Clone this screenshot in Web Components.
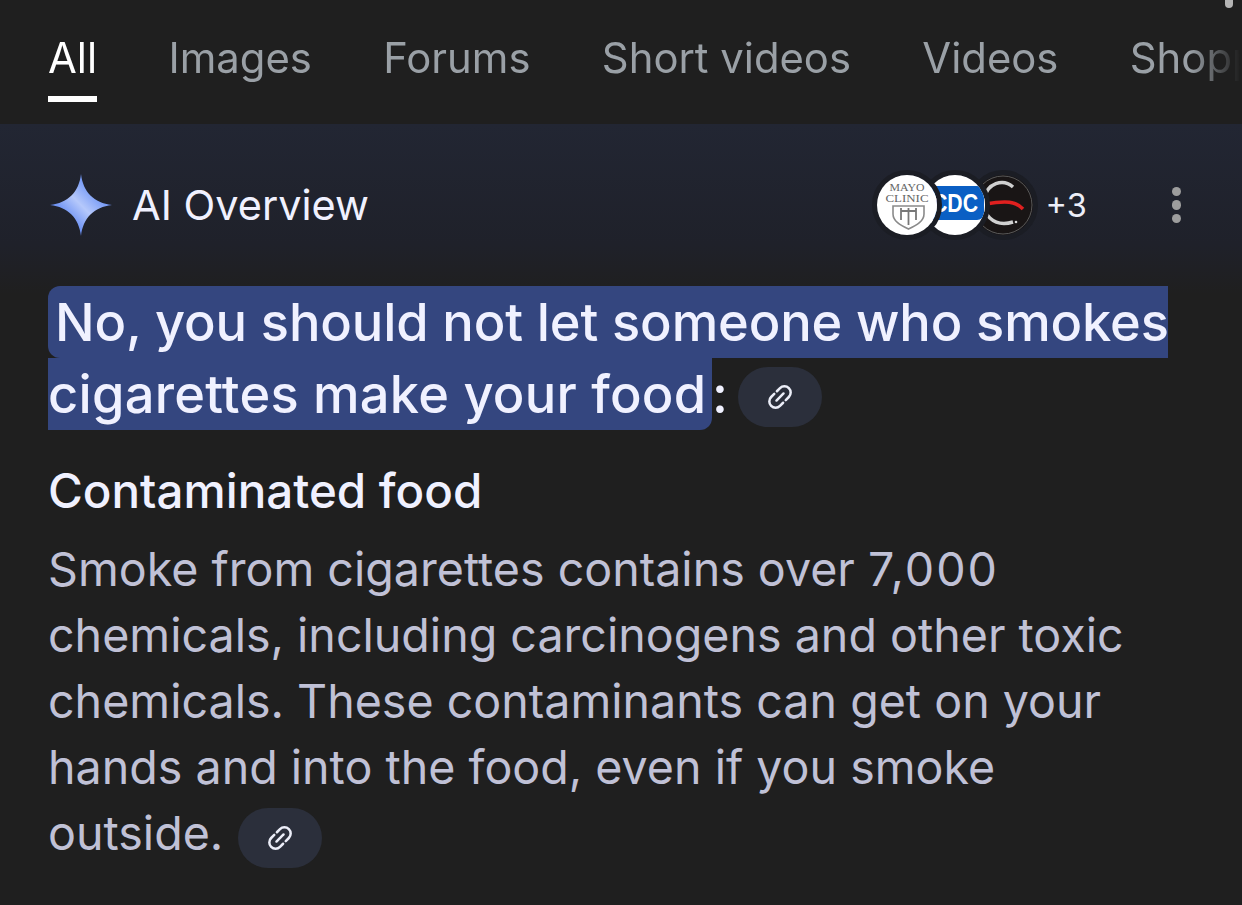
<!DOCTYPE html>
<html>
<head>
<meta charset="utf-8">
<title>AI Overview</title>
<style>
    html, body { margin: 0; height: 100%; background: #1f1f1f; overflow: hidden; }
    body { font-family: Inter, "Noto Sans", sans-serif; }
    .num { letter-spacing: 2px; }
</style>
</head>
<body>
<search-tabs>
    <tab-item active>All</tab-item>
    <tab-item>Images</tab-item>
    <tab-item>Forums</tab-item>
    <tab-item>Short videos</tab-item>
    <tab-item>Videos</tab-item>
    <tab-item>Shopping</tab-item>
</search-tabs>
<ai-overview>
    <overview-header></overview-header>
    <overview-title></overview-title>
    <overview-section heading="Contaminated food">
        Smoke from cigarettes contains over <span class="num">7,000</span> chemicals, including carcinogens and other toxic chemicals. These contaminants can get on your hands and into the food, even if you smoke outside.
    </overview-section>
</ai-overview>

<script>
const LINK_SVG = `<svg width="30" height="30" viewBox="0 0 24 24" fill="none" stroke="#eceef8" stroke-width="2" stroke-linecap="round" stroke-linejoin="round">
    <g transform="rotate(-45 12 12)">
        <path d="M10.500 7H7a5 5 0 0 0 0 10h3.500"/>
        <path d="M13.500 7H17a5 5 0 0 1 0 10h-3.500"/>
        <path d="M8 12h8"/>
    </g>
</svg>`;

class LinkChip extends HTMLElement {
    constructor() {
        super();
        this.attachShadow({ mode: "open" });
        this.shadowRoot.innerHTML = `
            <style>
                :host {
                    display: inline-flex;
                    align-items: center;
                    justify-content: center;
                    width: 84px;
                    height: 60px;
                    border-radius: 30px;
                    background: #2b2f3b;
                    vertical-align: middle;
                }
                svg { display: block; }
            </style>
            ${LINK_SVG}
        `;
    }
}
customElements.define("link-chip", LinkChip);

class TabItem extends HTMLElement {
    constructor() {
        super();
        this.attachShadow({ mode: "open" });
        this.shadowRoot.innerHTML = `
            <style>
                :host {
                    display: block;
                    flex: none;
                    height: 102px;
                    padding-top: 31px;
                    box-sizing: border-box;
                    font-size: 41.8px;
                    line-height: 54px;
                    color: #9aa0a6;
                }
                :host([active]) {
                    color: #fff;
                    border-bottom: 6px solid #fff;
                }
            </style>
            <slot></slot>
        `;
    }
}
customElements.define("tab-item", TabItem);

class SearchTabs extends HTMLElement {
    constructor() {
        super();
        this.attachShadow({ mode: "open" });
        this.shadowRoot.innerHTML = `
            <style>
                :host {
                    display: block;
                    position: relative;
                    height: 124px;
                    background: #1f1f1f;
                    overflow: hidden;
                }
                .row {
                    display: flex;
                    gap: 71.4px;
                    padding-left: 48px;
                    width: 1240px;
                    box-sizing: border-box;
                    overflow: hidden;
                    -webkit-mask-image: linear-gradient(90deg, #000 1190px, transparent 1240px);
                    mask-image: linear-gradient(90deg, #000 1190px, transparent 1240px);
                }
                .thumb {
                    position: absolute;
                    left: 1225px;
                    top: -4px;
                    width: 8px;
                    height: 12px;
                    border-radius: 4px;
                    background: #b4b4b4;
                }
            </style>
            <div class="row"><slot></slot></div>
            <div class="thumb"></div>
        `;
    }
}
customElements.define("search-tabs", SearchTabs);

class OverviewHeader extends HTMLElement {
    constructor() {
        super();
        this.attachShadow({ mode: "open" });
        this.shadowRoot.innerHTML = `
            <style>
                :host {
                    display: flex;
                    align-items: center;
                    height: 162px;
                    box-sizing: border-box;
                    padding: 0 0 0 50px;
                }
                .spark { flex: none; display: block; margin-right: 20px; }
                .label { font-size: 41.5px; font-weight: 400; color: #f0f1ff; flex: 1; }
                .stack { display: flex; align-items: center; margin-right: 8px; }
                .src {
                    flex: none;
                    width: 60px;
                    height: 60px;
                    border: 5px solid #1b1d24;
                    border-radius: 50%;
                    overflow: hidden;
                    margin-left: -22px;
                    box-sizing: content-box;
                }
                .src svg { display: block; }
                .src:nth-child(1) { z-index: 3; }
                .src:nth-child(2) { z-index: 2; }
                .src:nth-child(3) { z-index: 1; }
                .more { font-size: 32.5px; color: #eceef8; width: 41px; }
                .dots { display: flex; flex-direction: column; gap: 4px; margin: 0 61px 0 85px; }
                .dots i { display: block; width: 9.5px; height: 9.5px; border-radius: 50%; background: #9d9d9d; }
            </style>
            <svg class="spark" width="62" height="62" viewBox="0 0 62 62">
                <defs>
                    <linearGradient id="sg" x1="0.15" y1="0.85" x2="0.85" y2="0.15">
                        <stop offset="0" stop-color="#3f6ff0"/>
                        <stop offset="0.5" stop-color="#b5c8fb"/>
                        <stop offset="1" stop-color="#4f7df2"/>
                    </linearGradient>
                </defs>
                <path d="M31 0C33 18 44 29 62 31C44 33 33 44 31 62C29 44 18 33 0 31C18 29 29 18 31 0Z" fill="url(#sg)"/>
            </svg>
            <div class="label">AI Overview</div>
            <div class="stack">
                <div class="src">
                    <svg width="60" height="60" viewBox="0 0 60 60">
                        <rect width="60" height="60" fill="#fff"/>
                        <text x="30" y="16" text-anchor="middle" textLength="35" lengthAdjust="spacingAndGlyphs" font-family="'Liberation Serif', serif" font-size="9.500" fill="#666">MAYO</text>
                        <text x="30" y="27" text-anchor="middle" textLength="43" lengthAdjust="spacingAndGlyphs" font-family="'Liberation Serif', serif" font-size="9.500" fill="#666">CLINIC</text>
                        <path d="M16 31h31v8c0 7-7 11-15.500 15c-8.500-4-15.500-8-15.500-15z" fill="none" stroke="#8a8a8a" stroke-width="1.6"/>
                        <path d="M24 33v12M31.500 33v17M39 33v12M24 36h15" fill="none" stroke="#777" stroke-width="1.8"/>
                    </svg>
                </div>
                <div class="src">
                    <svg width="60" height="60" viewBox="0 0 60 60">
                        <rect width="60" height="60" fill="#fff"/>
                        <rect x="-10" y="11" width="69" height="34" rx="7" fill="#0a5fc4"/>
                        <text x="30" y="37" text-anchor="middle" textLength="46" lengthAdjust="spacingAndGlyphs" font-family="'Liberation Sans', sans-serif" font-weight="700" font-size="25" fill="#fff">CDC</text>
                    </svg>
                </div>
                <div class="src">
                    <svg width="60" height="60" viewBox="0 0 60 60">
                        <rect width="60" height="60" fill="#191515"/>
                        <circle cx="30" cy="30" r="29" fill="none" stroke="#5a5a5a" stroke-width="1"/>
                        <path d="M40 12C30 3 14 8 11 24C8 38 20 53 40 47" fill="none" stroke="#d0d0d0" stroke-width="3.400"/>
                        <path d="M12 29C24 27 34 26 40 28C44 29 47 31 50 34" fill="none" stroke="#e0201f" stroke-width="3.600"/>
                        <circle cx="43" cy="47" r="1.300" fill="#d8d8d8"/>
                    </svg>
                </div>
            </div>
            <div class="more">+3</div>
            <div class="dots"><i></i><i></i><i></i></div>
        `;
    }
}
customElements.define("overview-header", OverviewHeader);

class OverviewTitle extends HTMLElement {
    constructor() {
        super();
        this.attachShadow({ mode: "open" });
        this.shadowRoot.innerHTML = `
            <style>
                :host {
                    display: block;
                    margin-left: 48px;
                    font-size: 52.4px;
                    font-weight: 500;
                    line-height: 72px;
                    color: #f0f1ff;
                }
                .line { display: flex; align-items: center; height: 72px; }
                .hl { background: #34467f; flex: none; white-space: nowrap; box-sizing: border-box; height: 72px; }
                .one { width: 1120px; padding-left: 7px; letter-spacing: -0.13px; border-radius: 12px 0 0 12px; }
                .two { width: 664px; letter-spacing: 0.25px; border-radius: 0 0 12px 0; }
                .colon { margin: 0 10px 0 0; }
                link-chip { margin-top: 6px; }
            </style>
            <div class="line"><span class="hl one">No, you should not let someone who smokes</span></div>
            <div class="line"><span class="hl two">cigarettes make your food</span><span class="colon">:</span><link-chip></link-chip></div>
        `;
    }
}
customElements.define("overview-title", OverviewTitle);

class OverviewSection extends HTMLElement {
    constructor() {
        super();
        this.attachShadow({ mode: "open" });
        this.shadowRoot.innerHTML = `
            <style>
                :host { display: block; margin: 28px 0 0 48px; }
                h3 {
                    margin: 0 0 12px;
                    font-size: 47.5px;
                    font-weight: 500;
                    line-height: 66px;
                    color: #f0f1ff;
                }
                p {
                    margin: 0;
                    font-size: 46.6px;
                    line-height: 66px;
                    color: #c0c1d6;
                    width: 1100px;
                }
                link-chip { margin: 2px 0 0 2px; }
            </style>
            <h3 id="h"></h3>
            <p><slot></slot><link-chip></link-chip></p>
        `;
        this.shadowRoot.querySelector("#h").textContent = this.getAttribute("heading");
    }
}
customElements.define("overview-section", OverviewSection);

class AiOverview extends HTMLElement {
    constructor() {
        super();
        this.attachShadow({ mode: "open" });
        this.shadowRoot.innerHTML = `
            <style>
                :host {
                    display: block;
                    height: 781px;
                    box-sizing: border-box;
                    background: linear-gradient(180deg, #222633 0, #1f212a 120px, #1f1f1f 170px);
                }
            </style>
            <slot></slot>
        `;
    }
}
customElements.define("ai-overview", AiOverview);
</script>
</body>
</html>
